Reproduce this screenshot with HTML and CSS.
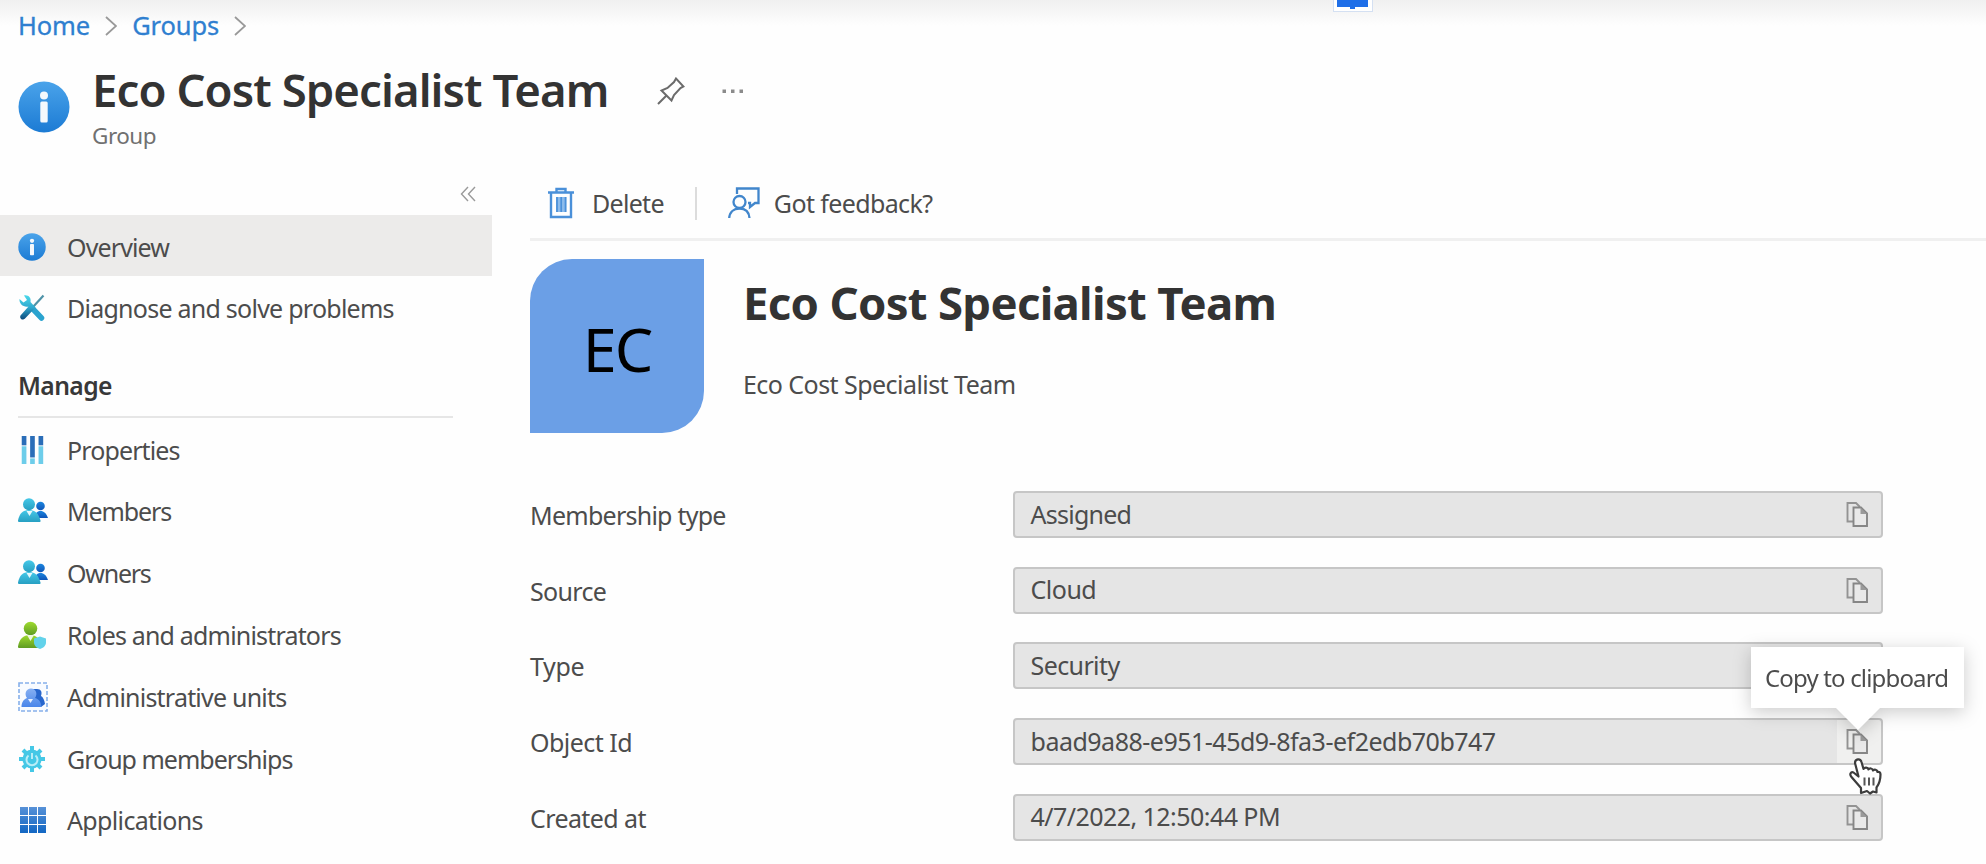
FILE: index.html
```html
<!DOCTYPE html>
<html lang="en">
<head>
<meta charset="utf-8">
<title>Eco Cost Specialist Team</title>
<link rel="stylesheet" href="styles.css">
</head>
<body>
<svg class="defs" aria-hidden="true">
  <defs>
    <linearGradient id="blue" x1="0" y1="0" x2="0" y2="1"><stop offset="0" stop-color="#4aa3ea"/><stop offset="1" stop-color="#1c7bd4"/></linearGradient>
    <linearGradient id="teal" x1="0" y1="0" x2="0" y2="1"><stop offset="0" stop-color="#45c8e8"/><stop offset="1" stop-color="#279fc2"/></linearGradient>
    <linearGradient id="navy" x1="0" y1="0" x2="0" y2="1"><stop offset="0" stop-color="#1b86df"/><stop offset="1" stop-color="#0f55b8"/></linearGradient>
    <linearGradient id="green" x1="0" y1="0" x2="0" y2="1"><stop offset="0" stop-color="#9fdb2f"/><stop offset="1" stop-color="#5f9c22"/></linearGradient>
    <linearGradient id="soft" x1="0" y1="0" x2="0" y2="1"><stop offset="0" stop-color="#86b0f2"/><stop offset="1" stop-color="#4a86ea"/></linearGradient>
    <linearGradient id="grid" x1="0" y1="0" x2="0" y2="26" gradientUnits="userSpaceOnUse"><stop offset="0" stop-color="#5a93d8"/><stop offset="1" stop-color="#1468c4"/></linearGradient>
    <linearGradient id="wrench" x1="0" y1="0" x2="0" y2="1"><stop offset="0" stop-color="#4bd9ea"/><stop offset=".5" stop-color="#2fa9cf"/><stop offset="1" stop-color="#0d4a7c"/></linearGradient>
    <symbol id="info" viewBox="0 0 52 52"><circle cx="26" cy="26" r="25.5" fill="url(#blue)"/><circle cx="26" cy="14.5" r="4" fill="#f4f8fc"/><rect x="22.3" y="20.5" width="7.4" height="21" rx="1.5" fill="#f4f8fc"/></symbol>
    <symbol id="people" viewBox="0 0 30 26"><circle cx="22.5" cy="8" r="4.3" fill="url(#navy)"/><path d="M17 20c0-5 2-7 5.500-7s5.500 2 7.500 7z" fill="url(#navy)"/><path d="M1 24c-.8 0-1.200-.5-1-1.500C1.500 15.500 4.500 12 11 12s9.500 3.500 11.500 10.500c.2 1-.2 1.500-1 1.500z" fill="url(#teal)"/><circle cx="11" cy="6.300" r="6" fill="url(#teal)"/><path d="M8.500 13h6L11.500 18z" fill="#e9f8fc"/></symbol>
    <symbol id="copy" viewBox="0 0 24 28"><path d="M8.500 21.500H2.500V3h8.500l4 4" fill="none" stroke="#939393" stroke-width="1.900"/><path d="M8.500 7.500h7.500l6 6V26H8.500z" fill="#e9e9e9" stroke="#868686" stroke-width="1.900"/><path d="M15.500 7.500v6.500H22z" fill="#9a9a9a"/></symbol>
  </defs>
</svg>

<nav class="breadcrumb">
  <a>Home</a>
  <svg class="chevron" viewBox="0 0 12 20"><path d="M1 1l10 9-10 9"/></svg>
  <a>Groups</a>
  <svg class="chevron" viewBox="0 0 12 20"><path d="M1 1l10 9-10 9"/></svg>
</nav>

<header class="header">
  <svg class="header-icon"><use href="#info"/></svg>
  <div class="header-text">
    <div class="header-line">
      <h1>Eco Cost Specialist Team</h1>
      <svg class="pin" viewBox="0 0 28 28"><path d="M1 27l9-9M4.500 13.500l10 10 2.500-5.500 6.500-7 3-1.500L19 1.500l-2 3.500-6.500 6z"/></svg>
      <svg class="dots" viewBox="0 0 24 6"><rect x="1.500" y="1.500" width="3.500" height="3.500"/><rect x="10" y="1.500" width="3.500" height="3.500"/><rect x="18.500" y="1.500" width="3.500" height="3.500"/></svg>
    </div>
    <div class="header-sub">Group</div>
  </div>
</header>

<div class="body">
  <aside class="sidebar">
    <div class="collapse"><svg viewBox="0 0 16 16"><path d="M8 1L1.500 8 8 15M15 1L8.500 8l6.500 7"/></svg></div>
    <div class="item active"><svg class="ico"><use href="#info"/></svg><span class="t-overview">Overview</span></div>
    <div class="item"><svg class="ico" viewBox="0 0 28 28"><path d="M25.500 1.500L15 13" stroke="#4f93a8" stroke-width="2.200"/><path d="M14 14l9.500 10" stroke="#2aa3cf" stroke-width="5.500" stroke-linecap="round"/><path d="M1.500 5l4 3.500L9 6 6 1.500c4-1 7.500 2 6.500 6.500l5 5.500L7.500 24c-2.500 3-6.500 1-5-2.500l8-9C5.500 13.500 1 10 1.500 5z" fill="url(#wrench)"/></svg><span class="t-diag">Diagnose and solve problems</span></div>
    <h2 class="section">Manage</h2>
    <div class="item"><svg class="ico" viewBox="0 0 28 30"><g fill="#6dcdea"><rect x="3" y="11" width="5" height="19"/><rect x="12" y="24" width="5" height="6"/><rect x="21" y="11" width="5" height="19"/></g><g fill="#2a6db8"><rect x="3" width="5" height="10"/><rect x="12" width="5" height="23"/><rect x="21" width="5" height="10"/></g></svg><span class="t-prop">Properties</span></div>
    <div class="item"><svg class="ico wide"><use href="#people"/></svg><span class="t-mem">Members</span></div>
    <div class="item"><svg class="ico wide"><use href="#people"/></svg><span class="t-own">Owners</span></div>
    <div class="item"><svg class="ico" viewBox="0 0 28 28"><path d="M1 27c-.8 0-1.200-.5-1-1.500C1.500 18 5 14 12 14s10 4 12 11.500c.2 1-.2 1.500-1 1.500z" fill="url(#green)"/><circle cx="12.500" cy="7.500" r="6.800" fill="url(#green)"/><path d="M9 14h7l-3.500 6z" fill="#eef8e0"/><path d="M22 15.500l6 2v4c0 3.500-3 5.500-6 6.500-3-1-6-3-6-6.500v-4z" fill="#62d2ea"/></svg><span class="t-roles">Roles and administrators</span></div>
    <div class="item"><svg class="ico wide-box" viewBox="0 0 30 30"><rect x="1" y="1" width="28" height="28" fill="#f8fbff" stroke="#86b0ea" stroke-width="1.600" stroke-dasharray="4 2"/><path d="M14 7h5c4 0 5.500 3 4 7 2 1 3.500 4 4 8l-4 3h-7z" fill="#2766cd"/><path d="M3.500 25c0-5 2.500-8 5.500-9-3-4-1-9.500 4-9.500s7 5.500 4 9.500c4 1 6 4 6.500 9z" fill="url(#soft)"/><path d="M10 17h5l-2.500 4z" fill="#e5efff"/></svg><span class="t-admin">Administrative units</span></div>
    <div class="item"><svg class="ico" viewBox="0 0 28 28"><g stroke="#45c8e6" stroke-width="4"><path d="M14 1v26M1 14h26M5 5l18 18M23 5L5 23"/></g><circle cx="14" cy="14" r="9.500" fill="#45c8e6"/><path d="M10.500 10.500a5.500 5.500 0 1 0 7 0" fill="none" stroke="#b9edf7" stroke-width="2"/><path d="M14 8v6" stroke="#b9edf7" stroke-width="2"/></svg><span class="t-gm">Group memberships</span></div>
    <div class="item"><svg class="ico" viewBox="0 0 28 28"><path fill="url(#grid)" d="M2 1h8v8H2zM11 1h8v8h-8zM20 1h8v8h-8zM2 10h8v8H2zM11 10h8v8h-8zM20 10h8v8h-8zM2 19h8v8H2zM11 19h8v8h-8zM20 19h8v8h-8z"/></svg><span class="t-app">Applications</span></div>
  </aside>

  <main class="main">
    <div class="toolbar">
      <svg class="trash" viewBox="0 0 26 32"><path d="M0 5.500h26M8.500 5V2h9v3M3 6v24h20V6" fill="none" stroke="#4a90d9" stroke-width="2.400"/><path d="M8 10h10.500v15H8z" fill="#8dbcec"/><path d="M9 10v15M13.200 10v15M17.500 10v15" stroke="#4a90d9" stroke-width="1.700"/></svg>
      <span class="t-delete">Delete</span>
      <i class="divider"></i>
      <svg class="feedback" viewBox="0 0 32 32"><g fill="none" stroke="#4186cc" stroke-width="2.300"><path d="M9 7V1.500h21.500V16H27v0l-5 4v-4h-2"/><circle cx="11.500" cy="15" r="6"/><path d="M1.200 31c.5-6 4.500-9.500 10.300-9.500S21 25 21.500 31"/></g></svg>
      <span class="t-feed">Got feedback?</span>
    </div>

    <section class="profile">
      <div class="avatar">EC</div>
      <div class="profile-text">
        <h2 class="profile-name">Eco Cost Specialist Team</h2>
        <p class="profile-desc">Eco Cost Specialist Team</p>
      </div>
    </section>

    <section class="fields">
      <div class="field"><label class="l-mt">Membership type</label><div class="box"><span class="v-as">Assigned</span><svg class="copy"><use href="#copy"/></svg></div></div>
      <div class="field"><label class="l-so">Source</label><div class="box"><span class="v-cl">Cloud</span><svg class="copy"><use href="#copy"/></svg></div></div>
      <div class="field"><label class="l-ty">Type</label><div class="box"><span class="v-se">Security</span><svg class="copy"><use href="#copy"/></svg></div></div>
      <div class="field"><label class="l-ob">Object Id</label><div class="box hover"><span class="v-id">baad9a88-e951-45d9-8fa3-ef2edb70b747</span><svg class="copy"><use href="#copy"/></svg>
        <div class="tooltip"><span class="t-tip">Copy to clipboard</span></div>
        <svg class="cursor" viewBox="0 0 34 37"><path d="M7 5c0-4.500 5.500-5 6.500-1l2 7c1-2 4.500-2 5 .5 1-1.500 4-1.500 4.500 1 1.500-1.500 4-1 4.500 1.500 2-.5 3 .5 3 2.500 0 5-1 9-4 13v5l-3.500-1-3 2-3-2.500-6 2v-5L3.500 19c-2.500-3-.5-5.500 2-4.500l5 4z" fill="#fff" stroke="#3c3c3c" stroke-width="2.200" stroke-linejoin="round"/><path d="M16.500 19.500v8M21 19.500v8M25.500 19.500v8" stroke="#555" stroke-width="2"/></svg>
      </div></div>
      <div class="field"><label class="l-cr">Created at</label><div class="box"><span class="v-da">4/7/2022, 12:50:44 PM</span><svg class="copy"><use href="#copy"/></svg></div></div>
    </section>
  </main>
</div>

<div class="marker"><i class="marker-bar"></i><i class="marker-stem"></i></div>
</body>
</html>
```

FILE: styles.css
```css
* { box-sizing: border-box; }
body {
  margin: 0;
  width: 1986px;
  height: 864px;
  overflow: hidden;
  position: relative;
  background: #fefefe linear-gradient(#f0f0f0, #fefefe 26px) no-repeat 0 0 / 100% 26px;
  font: 25px/34px "Noto Sans", sans-serif;
  color: #4c4c4c;
}
h1, h2, p { margin: 0; }
span, label, a, h1, h2, p { white-space: nowrap; }
.defs { position: absolute; width: 0; height: 0; }

.breadcrumb { display: flex; align-items: center; height: 50px; padding-left: 18px; font-size: 25.5px; letter-spacing: -.1px; color: #2f7fd0; -webkit-text-stroke: .3px #2f7fd0; }
.chevron { width: 12px; height: 20px; margin: 1px 15px 0 15px; fill: none; stroke: #999; stroke-width: 1.8; }

.header { display: flex; height: 129px; padding-top: 2px; }
.header-icon { width: 52px; height: 52px; margin: 29px 0 0 18px; }
.header-text { margin-left: 22px; }
.header-line { display: flex; align-items: center; height: 76px; }
h1 { margin-top: -2px; font-size: 45.5px; line-height: 60px; font-weight: 600; letter-spacing: -.92px; color: #333; }
.pin { width: 28px; height: 28px; margin: 2px 0 0 49px; fill: none; stroke: #6b6b6b; stroke-width: 2; }
.dots { width: 24px; height: 6px; margin: 2px 0 0 36px; fill: #8b8b8b; }
.header-sub { font-size: 22.5px; line-height: 30px; letter-spacing: -.5px; margin-top: -7px; color: #707070; }

.body { display: flex; }
.sidebar { width: 492px; }
.collapse { height: 36px; padding: 7px 0 0 460px; }
.collapse svg { display: block; width: 16px; height: 16px; fill: none; stroke: #9a9a9a; stroke-width: 1.4; }
.item { display: flex; align-items: center; height: 61.8px; padding: 1px 0 0 18px; }
.active { height: 61px; padding-top: 2px; background: #ecebea; }
.active + .item { padding-top: 3px; }
.ico { width: 28px; height: 28px; margin-right: 21px; }
.wide { width: 30px; height: 26px; margin-right: 19px; }
.wide-box { width: 30px; height: 30px; margin-right: 19px; }
.section { width: 435px; height: 80.5px; margin: 0 0 0 18px; padding-top: 31px; font-size: 24.7px; font-weight: 600; letter-spacing: -.6px; color: #383838; border-bottom: 2px solid #e6e6e6; }

.t-overview { letter-spacing: -.88px; }
.t-diag { letter-spacing: -.75px; }
.t-prop { letter-spacing: -.88px; }
.t-mem { letter-spacing: -1.12px; }
.t-own { letter-spacing: -1.25px; }
.t-roles { letter-spacing: -.82px; }
.t-admin { letter-spacing: -.78px; }
.t-gm { letter-spacing: -1px; }
.t-app { letter-spacing: -.65px; }

.main { flex: 1; padding-left: 38px; }
.toolbar { display: flex; align-items: center; height: 62px; padding: 0 0 11px 18px; border-bottom: 3px solid #f0f0f0; }
.trash { width: 26px; height: 32px; margin-right: 18px; }
.t-delete { letter-spacing: -.7px; }
.divider { width: 2px; height: 33px; margin: 0 31px 0 31px; background: #dcdcdc; }
.feedback { width: 32px; height: 32px; margin-right: 14px; }
.t-feed { letter-spacing: -.62px; }

.profile { display: flex; height: 250px; padding-top: 18px; }
.avatar { display: flex; align-items: center; justify-content: center; width: 174px; height: 174px; padding-top: 6px; border-radius: 42px 0; background: #6b9fe6; color: #000; font-size: 61px; line-height: 80px; letter-spacing: -2px; }
.profile-text { margin-left: 39px; }
.profile-name { margin-top: 13px; font-size: 45.5px; line-height: 60px; font-weight: 700; letter-spacing: -.7px; color: #333; }
.profile-desc { margin-top: 35px; letter-spacing: -.55px; }

.field { display: flex; align-items: center; height: 47px; margin-bottom: 28.7px; }
.field label { width: 483px; padding-top: 1px; }
.box { position: relative; display: flex; align-items: center; justify-content: space-between; width: 870px; height: 47px; padding: 0 12px 2px 15.5px; border: 2px solid #c6c6c6; border-radius: 4px; background: #e5e5e5; }
.hover { background: linear-gradient(90deg, transparent 822px, #f0f0ef 822px) #e5e5e5; }
.copy { width: 24px; height: 28px; margin-top: 1px; }
.l-mt { letter-spacing: -.75px; }
.l-so { letter-spacing: -.68px; }
.l-ty { letter-spacing: -.35px; }
.l-ob { letter-spacing: -.54px; }
.l-cr { letter-spacing: -.6px; }
.v-as { letter-spacing: -.75px; }
.v-cl { letter-spacing: -.5px; }
.v-se { letter-spacing: -.6px; }
.v-id { letter-spacing: -.5px; }
.v-da { letter-spacing: -.55px; }

.tooltip { position: absolute; left: 736px; top: -73px; width: 213px; height: 61px; padding: 13px 0 0 14px; background: #fff; filter: drop-shadow(0 4px 9px rgba(0, 0, 0, .2)); }
.tooltip::after { content: ""; position: absolute; left: 85px; top: 61px; border: solid transparent; border-width: 22px 22px 0; border-top-color: #fff; }
.t-tip { font-size: 24px; letter-spacing: -.84px; }
.cursor { position: absolute; left: 833px; top: 38px; width: 34px; height: 37px; z-index: 2; }

.marker { position: absolute; left: 1333px; top: 0; width: 40px; height: 12px; background: #fff; border: solid #d4e0f2; border-width: 0 1px 1px; }
.marker-bar { display: block; width: 31px; height: 7px; margin-left: 3px; background: #1f6fe8; }
.marker-stem { display: block; width: 5px; height: 2px; margin-left: 16px; background: #1f6fe8; }
```
